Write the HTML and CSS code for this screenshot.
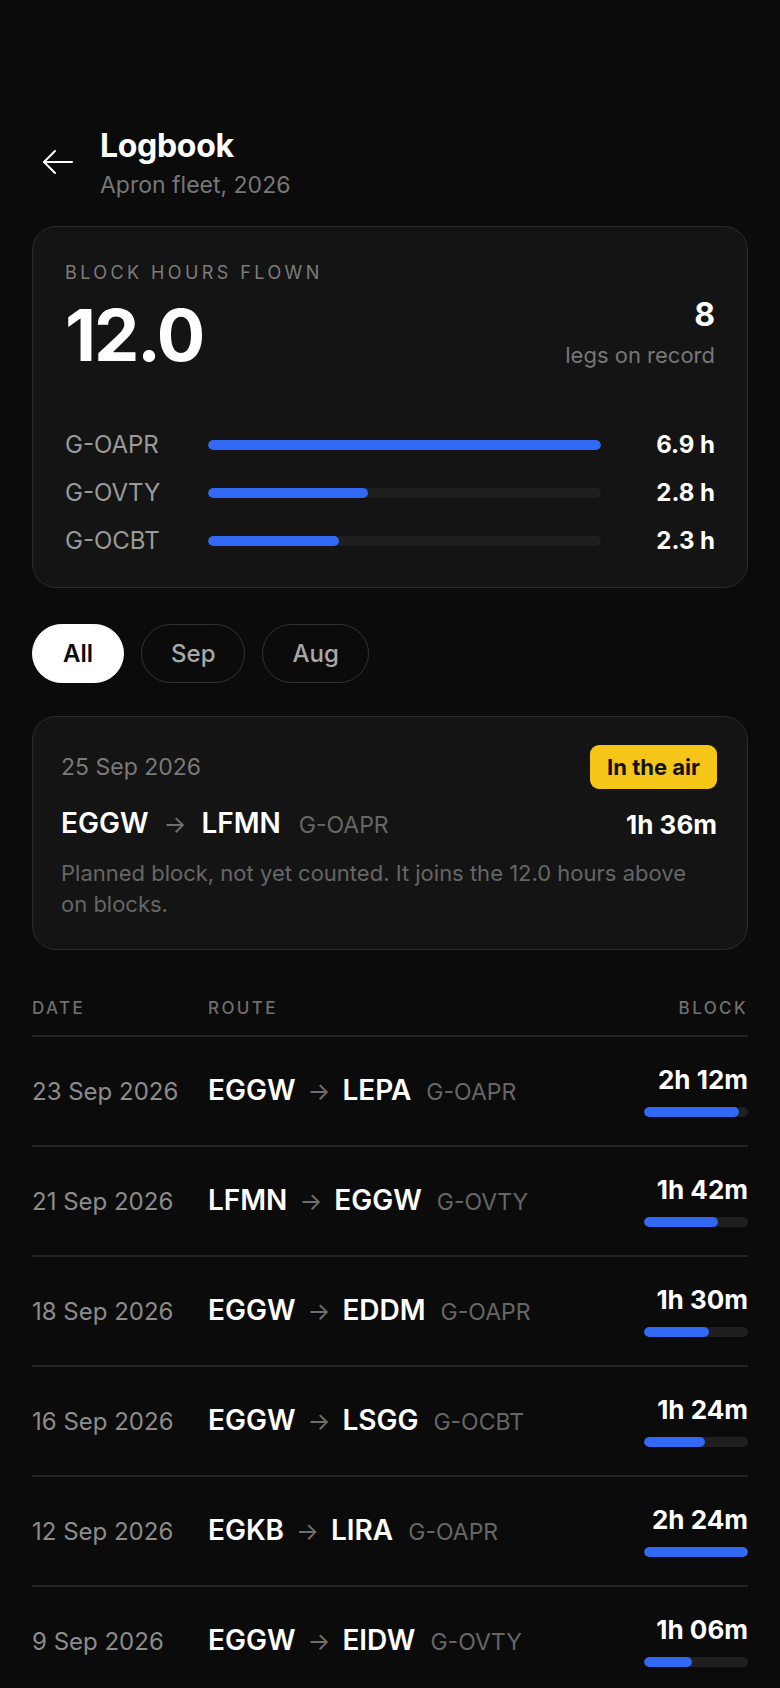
FILE: index.html
```html
<!DOCTYPE html>
<html lang="en">
<head>
    <meta charset="UTF-8">
    <meta name="viewport" content="width=device-width, initial-scale=1.0">
    <title>Logbook</title>
    <link rel="stylesheet" href="styles.css">
</head>
<body>
    <div class="page">
        <header class="top">
            <button class="back" aria-label="Back">
                <svg width="32" height="26" viewBox="0 0 32 26" fill="none" stroke="#fff" stroke-width="2" stroke-linecap="round" stroke-linejoin="round">
                    <path d="M30 13H2"/>
                    <path d="M13 2L2 13l11 11"/>
                </svg>
            </button>
            <div>
                <h1>Logbook</h1>
                <p class="sub">Apron fleet, 2026</p>
            </div>
        </header>

        <section class="card summary">
            <div class="label">Block hours flown</div>
            <div class="stats">
                <div class="big">12.0</div>
                <div class="legs">
                    <div class="legs-num">8</div>
                    <div class="legs-txt">legs on record</div>
                </div>
            </div>
            <div class="fleet">
                <div class="reg">G-OAPR</div>
                <div class="track"><div class="fill" style="width: 100%"></div></div>
                <div class="hrs">6.9 h</div>

                <div class="reg">G-OVTY</div>
                <div class="track"><div class="fill" style="width: 40.6%"></div></div>
                <div class="hrs">2.8 h</div>

                <div class="reg">G-OCBT</div>
                <div class="track"><div class="fill" style="width: 33.3%"></div></div>
                <div class="hrs">2.3 h</div>
            </div>
        </section>

        <div class="chips">
            <button class="chip active">All</button>
            <button class="chip">Sep</button>
            <button class="chip">Aug</button>
        </div>

        <section class="card live">
            <div class="live-top">
                <span class="live-date">25 Sep 2026</span>
                <span class="badge">In the air</span>
            </div>
            <div class="live-route">
                <div class="route">
                    <b>EGGW</b><span class="arr">&rarr;</span><b>LFMN</b><span class="tail">G-OAPR</span>
                </div>
                <span class="dur">1h 36m</span>
            </div>
            <p class="note">Planned block, not yet counted. It joins the 12.0 hours above on blocks.</p>
        </section>

        <table class="log">
            <thead>
                <tr>
                    <th>Date</th>
                    <th>Route</th>
                    <th class="r">Block</th>
                </tr>
            </thead>
            <tbody>
                <tr>
                    <td class="date">23 Sep 2026</td>
                    <td><div class="route"><b>EGGW</b><span class="arr">&rarr;</span><b>LEPA</b><span class="tail">G-OAPR</span></div></td>
                    <td class="r"><div class="time">2h 12m</div><div class="mini"><div class="fill" style="width: 91.7%"></div></div></td>
                </tr>
                <tr>
                    <td class="date">21 Sep 2026</td>
                    <td><div class="route"><b>LFMN</b><span class="arr">&rarr;</span><b>EGGW</b><span class="tail">G-OVTY</span></div></td>
                    <td class="r"><div class="time">1h 42m</div><div class="mini"><div class="fill" style="width: 70.8%"></div></div></td>
                </tr>
                <tr>
                    <td class="date">18 Sep 2026</td>
                    <td><div class="route"><b>EGGW</b><span class="arr">&rarr;</span><b>EDDM</b><span class="tail">G-OAPR</span></div></td>
                    <td class="r"><div class="time">1h 30m</div><div class="mini"><div class="fill" style="width: 62.5%"></div></div></td>
                </tr>
                <tr>
                    <td class="date">16 Sep 2026</td>
                    <td><div class="route"><b>EGGW</b><span class="arr">&rarr;</span><b>LSGG</b><span class="tail">G-OCBT</span></div></td>
                    <td class="r"><div class="time">1h 24m</div><div class="mini"><div class="fill" style="width: 58.3%"></div></div></td>
                </tr>
                <tr>
                    <td class="date">12 Sep 2026</td>
                    <td><div class="route"><b>EGKB</b><span class="arr">&rarr;</span><b>LIRA</b><span class="tail">G-OAPR</span></div></td>
                    <td class="r"><div class="time">2h 24m</div><div class="mini"><div class="fill" style="width: 100%"></div></div></td>
                </tr>
                <tr>
                    <td class="date">9 Sep 2026</td>
                    <td><div class="route"><b>EGGW</b><span class="arr">&rarr;</span><b>EIDW</b><span class="tail">G-OVTY</span></div></td>
                    <td class="r"><div class="time">1h 06m</div><div class="mini"><div class="fill" style="width: 45.8%"></div></div></td>
                </tr>
            </tbody>
        </table>
    </div>
</body>
</html>
```

FILE: styles.css
```css
body {
    margin: 0;
    background: #0b0b0b;
    color: #fff;
    font-family: Inter, "Noto Sans", sans-serif;
}
.page {
    padding: 128px 32px 0;
}
.top {
    display: flex;
    align-items: flex-start;
    gap: 16px;
}
.back {
    width: 52px;
    height: 48px;
    margin-top: 10px;
    display: flex;
    align-items: center;
    justify-content: center;
    background: none;
    border: 0;
    padding: 0;
    cursor: pointer;
}
h1 {
    margin: 0;
    font-size: 32px;
    line-height: 36px;
    font-weight: 700;
    letter-spacing: -0.01em;
}
.sub {
    margin: 6px 0 0;
    font-size: 23px;
    line-height: 30px;
    color: #777;
}

.card {
    background: #141414;
    border: 1px solid #2b2b2b;
    border-radius: 24px;
}
.summary {
    margin-top: 26px;
    padding: 35px 32px 32px;
}
.label {
    font-size: 18px;
    line-height: 22px;
    letter-spacing: 0.19em;
    text-transform: uppercase;
    color: #7c7c7c;
}
.stats {
    display: flex;
    justify-content: space-between;
    align-items: flex-end;
    margin-top: 13px;
}
.big {
    font-size: 72px;
    line-height: 72px;
    font-weight: 700;
    letter-spacing: -0.03em;
}
.legs {
    text-align: right;
}
.legs-num {
    font-size: 32px;
    line-height: 36px;
    font-weight: 700;
    margin-bottom: 8px;
}
.legs-txt {
    font-size: 22px;
    line-height: 28px;
    color: #777;
    padding-bottom: 2px;
}
.fleet {
    margin-top: 60px;
    display: grid;
    grid-template-columns: 119px 1fr 90px;
    column-gap: 24px;
    row-gap: 20px;
    align-items: center;
}
.reg {
    font-size: 24px;
    line-height: 28px;
    color: #9a9a9a;
}
.hrs {
    font-size: 24px;
    line-height: 28px;
    font-weight: 700;
    text-align: right;
}
.track, .mini {
    height: 10px;
    border-radius: 5px;
    background: #1f1f1f;
    overflow: hidden;
}
.fill {
    height: 100%;
    border-radius: 5px;
    background: #3169f5;
}

.chips {
    display: flex;
    gap: 17px;
    margin-top: 36px;
}
.chip {
    height: 59px;
    padding: 0 29px;
    border-radius: 30px;
    border: 1.5px solid #333;
    background: transparent;
    color: #a8a8a8;
    font-family: inherit;
    font-size: 24px;
    font-weight: 500;
}
.chip.active {
    padding: 0 30px;
    background: #fff;
    border-color: #fff;
    color: #0b0b0b;
    font-weight: 600;
}

.live {
    margin-top: 33px;
    padding: 28px 30px 29px 28px;
}
.live-top {
    display: flex;
    justify-content: space-between;
    align-items: center;
}
.live-date {
    font-size: 23px;
    color: #7a7a7a;
}
.badge {
    background: #f5c518;
    color: #111;
    font-weight: 700;
    font-size: 22px;
    line-height: 44px;
    padding: 0 17px;
    border-radius: 9px;
}
.live-route {
    display: flex;
    justify-content: space-between;
    align-items: center;
    margin-top: 18px;
}
.route {
    display: flex;
    align-items: baseline;
    gap: 12px;
    font-size: 28px;
    line-height: 32px;
}
.live .route {
    gap: 15px;
}
.route b {
    font-weight: 600;
}
.arr {
    color: #6f6f6f;
    font-size: 24px;
}
.tail {
    color: #666;
    font-size: 23px;
    margin-left: 3px;
}
.dur {
    font-size: 26px;
    font-weight: 700;
}
.note {
    margin: 17px 0 0;
    max-width: 640px;
    font-size: 22px;
    line-height: 31px;
    color: #666;
}

.log {
    width: 100%;
    border-collapse: collapse;
    margin-top: 48px;
}
.log th {
    text-align: left;
    font-size: 17px;
    line-height: 20px;
    font-weight: 500;
    letter-spacing: 0.14em;
    text-transform: uppercase;
    color: #6f6f6f;
    padding: 0 0 17px;
    border-bottom: 2px solid #242424;
}
.log th.r, .log td.r {
    text-align: right;
}
.log td {
    height: 108px;
    padding: 0;
    vertical-align: middle;
    border-bottom: 2px solid #242424;
}
.log td.date {
    width: 176px;
    font-size: 24px;
    color: #8c8c8c;
}
.time {
    font-size: 26px;
    line-height: 30px;
    font-weight: 700;
}
.mini {
    width: 104px;
    margin: 12px 0 0 auto;
}
```
